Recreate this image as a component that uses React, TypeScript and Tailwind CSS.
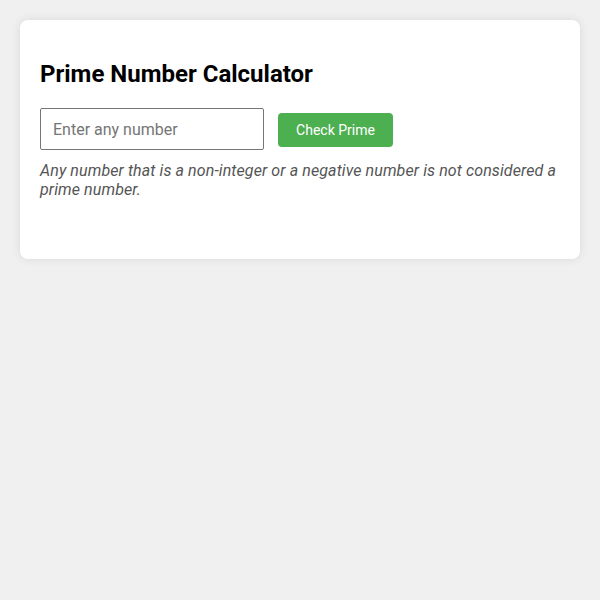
import React, { useState } from "react";

export default function App() {
  const [value, setValue] = useState("");

  return (
    <div className="min-h-screen bg-[#f0f0f0] p-5 font-['Roboto',sans-serif]">
      <div className="rounded-lg bg-white px-5 pt-5 pb-[60px] shadow-[0_0_10px_rgba(0,0,0,0.1)]">
        <h2 className="my-5 text-2xl leading-7 font-bold text-black">Prime Number Calculator</h2>
        <div className="flex items-center">
          <input
            type="text"
            value={value}
            onChange={(e) => setValue(e.target.value)}
            placeholder="Enter any number"
            className="h-[42px] w-[224px] rounded-[2px] border border-[#767676] px-3 text-base text-black placeholder:text-[#757575] outline-none"
          />
          <button className="mt-[2px] ml-[14px] h-[34px] w-[115px] rounded-[4px] bg-[#4caf50] text-sm text-white">
            Check Prime
          </button>
        </div>
        <p className="mt-[11px] text-base leading-[19px] tracking-[0.1px] text-[#555] italic">
          Any number that is a non-integer or a negative number is not considered a prime number.
        </p>
      </div>
    </div>
  );
}
